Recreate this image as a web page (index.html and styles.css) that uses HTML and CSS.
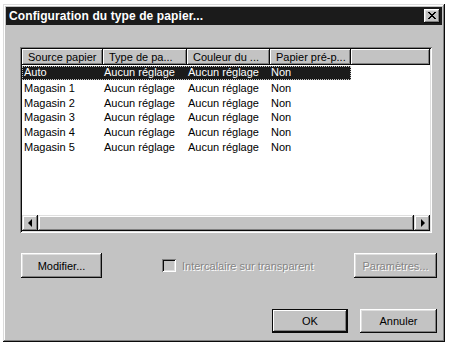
FILE: index.html
```html
<!DOCTYPE html>
<html lang="fr">
<head>
<meta charset="utf-8">
<title>Configuration du type de papier...</title>
<link rel="stylesheet" href="styles.css">
</head>
<body>
<div class="dialog">
  <div class="titlebar">
    <span class="title">Configuration du type de papier...</span>
    <div class="close" aria-label="Fermer">
      <svg width="8" height="7" viewBox="0 0 8 7"><path d="M0 0h2v1h1v1h2v-1h1v-1h2v1h-1v1h-1v1h-1v1h1v1h1v1h1v1h-2v-1h-1v-1h-2v1h-1v1h-2v-1h1v-1h1v-1h1v-1h-1v-1h-1v-1h-1z" fill="#000"/></svg>
    </div>
  </div>
  <div class="content">
    <div class="listview">
      <div class="header">
        <div class="hcell">Source papier</div>
        <div class="hcell">Type de pa...</div>
        <div class="hcell">Couleur du ...</div>
        <div class="hcell">Papier pré-p...</div>
        <div class="hcell"></div>
      </div>
      <div class="rows">
        <div class="row sel"><span>Auto</span><span>Aucun réglage</span><span>Aucun réglage</span><span>Non</span></div>
        <div class="row"><span>Magasin 1</span><span>Aucun réglage</span><span>Aucun réglage</span><span>Non</span></div>
        <div class="row"><span>Magasin 2</span><span>Aucun réglage</span><span>Aucun réglage</span><span>Non</span></div>
        <div class="row"><span>Magasin 3</span><span>Aucun réglage</span><span>Aucun réglage</span><span>Non</span></div>
        <div class="row"><span>Magasin 4</span><span>Aucun réglage</span><span>Aucun réglage</span><span>Non</span></div>
        <div class="row"><span>Magasin 5</span><span>Aucun réglage</span><span>Aucun réglage</span><span>Non</span></div>
      </div>
      <div class="hscroll">
        <div class="sbtn"><span class="arrow-left"></span></div>
        <div class="thumb"></div>
        <div class="sbtn"><span class="arrow-right"></span></div>
      </div>
    </div>
    <div class="actions">
      <div class="btn btn-modify">Modifier...</div>
      <div class="check">
        <span class="box"></span>
        <span class="disabled-text">Intercalaire sur transparent</span>
      </div>
      <div class="btn btn-params"><span class="disabled-text">Paramètres...</span></div>
    </div>
    <div class="footer">
      <div class="btn btn-ok">OK</div>
      <div class="btn btn-cancel">Annuler</div>
    </div>
  </div>
</div>
</body>
</html>
```

FILE: styles.css
```css
html, body {
  margin: 0;
  padding: 0;
  background: #fff;
}

body {
  padding: 4px 0 0 3px;
  font-family: "Liberation Sans", Arial, sans-serif;
  font-size: 11px;
  color: #000;
}

.dialog {
  box-sizing: border-box;
  width: 442px;
  height: 338px;
  padding: 3px;
  background: #c3c3c3;
  box-shadow: inset -1px -1px #0a0a0a, inset 1px 1px #dcdcdc, inset -2px -2px #808080, inset 2px 2px #fff;
  display: flex;
  flex-direction: column;
}

.titlebar {
  height: 18px;
  background: #1b1b1b;
  display: flex;
  align-items: center;
  justify-content: space-between;
  padding: 0 2px 0 3px;
}

.title {
  color: #fff;
  font-weight: bold;
  font-size: 12px;
  letter-spacing: 0.1px;
}

.close {
  box-sizing: border-box;
  width: 16px;
  height: 14px;
  background: #c3c3c3;
  box-shadow: inset -1px -1px #0a0a0a, inset 1px 1px #fff, inset -2px -2px #808080, inset 2px 2px #dfdfdf;
  display: flex;
  align-items: center;
  justify-content: center;
  padding-bottom: 1px;
}

.content {
  flex: 1;
  display: flex;
  flex-direction: column;
  padding: 22px 5px 0 14px;
}

.listview {
  box-sizing: border-box;
  width: 412px;
  height: 186px;
  padding: 2px;
  background: #fff;
  box-shadow: inset 1px 1px #808080, inset -1px -1px #fff, inset 2px 2px #0a0a0a, inset -2px -2px #dfdfdf;
  display: flex;
  flex-direction: column;
}

.header {
  display: grid;
  grid-template-columns: 81px 84px 83px 81px 1fr;
  height: 16px;
  background: #c3c3c3;
}

.hcell {
  box-sizing: border-box;
  padding: 0 0 0 6px;
  line-height: 16px;
  white-space: nowrap;
  overflow: hidden;
  box-shadow: inset -1px -1px #0a0a0a, inset 1px 1px #fff, inset -2px -2px #808080;
}

.rows {
  flex: 1;
  padding-top: 1px;
}

.row {
  display: grid;
  grid-template-columns: 81px 84px 83px 81px;
  width: 329px;
  height: 14.8px;
  line-height: 14px;
  white-space: nowrap;
}

.row span {
  padding-left: 1px;
  overflow: hidden;
}

.row span:first-child {
  padding-left: 2px;
}

.row.sel {
  background: #1b1b1b;
  color: #fff;
  box-sizing: border-box;
  outline: 1px dotted #c3c3c3;
  outline-offset: -1px;
  height: 13.8px;
  margin-bottom: 1px;
  line-height: 13px;
}

.hscroll {
  height: 16px;
  display: flex;
  background: #c3c3c3;
}

.sbtn, .thumb {
  box-sizing: border-box;
  box-shadow: inset -1px -1px #0a0a0a, inset 1px 1px #dfdfdf, inset -2px -2px #808080, inset 2px 2px #fff;
  background: #c3c3c3;
}

.sbtn {
  width: 16px;
  display: flex;
  align-items: center;
  justify-content: center;
}

.thumb {
  flex: 1;
}

.arrow-left {
  width: 0;
  height: 0;
  border-top: 4px solid transparent;
  border-bottom: 4px solid transparent;
  border-right: 4px solid #000;
  margin-right: 1px;
}

.arrow-right {
  width: 0;
  height: 0;
  border-top: 4px solid transparent;
  border-bottom: 4px solid transparent;
  border-left: 4px solid #000;
  margin-left: 1px;
}

.actions {
  display: flex;
  align-items: center;
  margin-top: 20px;
  padding-left: 1px;
}

.btn {
  box-sizing: border-box;
  height: 25px;
  display: flex;
  align-items: center;
  justify-content: center;
  background: #c3c3c3;
  box-shadow: inset -1px -1px #0a0a0a, inset 1px 1px #fff, inset -2px -2px #808080, inset 2px 2px #dfdfdf;
  white-space: nowrap;
}

.btn-modify {
  width: 81px;
}

.check {
  display: flex;
  align-items: center;
  margin-left: 60px;
}

.box {
  box-sizing: border-box;
  width: 14px;
  height: 13px;
  margin-right: 6px;
  background: #c3c3c3;
  box-shadow: inset 1px 1px #808080, inset -1px -1px #fff, inset 2px 2px #0a0a0a, inset -2px -2px #dfdfdf;
}

.disabled-text {
  color: #858585;
  text-shadow: 1px 1px #fff;
}

.btn-params {
  width: 83px;
  margin-left: auto;
}

.footer {
  display: flex;
  justify-content: flex-end;
  gap: 12px;
  margin-top: 31px;
}

.btn-ok {
  width: 76px;
  height: 24px;
  box-shadow: inset 0 0 0 1px #0a0a0a, inset -2px -2px #0a0a0a, inset 2px 2px #fff, inset -3px -3px #808080;
}

.btn-cancel {
  width: 77px;
  height: 24px;
}
```
